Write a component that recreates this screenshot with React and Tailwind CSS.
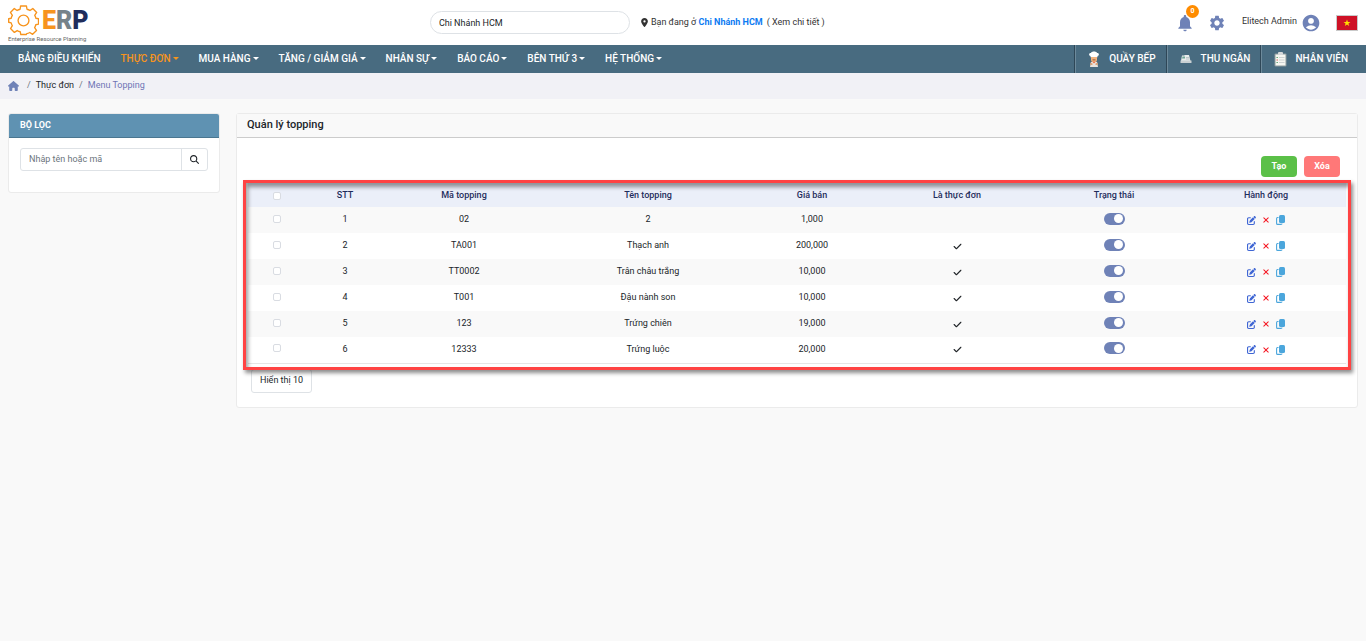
import React, { useState } from "react";
import {
  FaCheck,
  FaHouse,
  FaLocationDot,
  FaMagnifyingGlass,
  FaPenToSquare,
} from "react-icons/fa6";
import { IoClose } from "react-icons/io5";
import { MdAccountCircle, MdNotifications, MdSettings } from "react-icons/md";

const menus = [
  { label: "BẢNG ĐIỀU KHIỂN" },
  { label: "THỰC ĐƠN", caret: true, active: true },
  { label: "MUA HÀNG", caret: true },
  { label: "TĂNG / GIẢM GIÁ", caret: true },
  { label: "NHÂN SỰ", caret: true },
  { label: "BÁO CÁO", caret: true },
  { label: "BÊN THỨ 3", caret: true },
  { label: "HỆ THỐNG", caret: true },
];

const toppings = [
  { code: "02", name: "2", price: "1,000", inMenu: false },
  { code: "TA001", name: "Thạch anh", price: "200,000", inMenu: true },
  { code: "TT0002", name: "Trân châu trắng", price: "10,000", inMenu: true },
  { code: "T001", name: "Đậu nành son", price: "10,000", inMenu: true },
  { code: "123", name: "Trứng chiên", price: "19,000", inMenu: true },
  { code: "12333", name: "Trứng luộc", price: "20,000", inMenu: true },
];

const Logo = () => (
  <a href="#" className="flex w-20 flex-col" aria-label="ERP">
    <div className="flex h-8 items-center gap-[3px]">
      <svg viewBox="0 0 32 32" className="h-8 w-[31px] shrink-0" fill="none" stroke="#f7941d" strokeWidth="1.4">
        <path
          strokeLinejoin="round"
          d="M13 1.5h6l.6 3.400q1.700.4 3.100 1.300l2.900-2 4 4-2 3q.9 1.400 1.200 3l2.700.5v5.600l-2.800.6q-.4 1.600-1.200 3l1.900 2.900-4 4-2.900-1.900q-1.500.9-3.100 1.200L18.800 31h-5.600l-.6-2.900q-1.700-.3-3.100-1.200l-2.900 1.900-4-4 1.900-2.900q-.8-1.400-1.200-3L.7 18.300v-3.600l2.600-.5q.3-1.600 1.200-3l-2-3 4-4 2.900 2q1.400-.9 3.100-1.300z"
        />
        <circle cx="16" cy="16.5" r="5.6" />
      </svg>
      <span className="pt-[3px] text-[25px] leading-8 font-black">
        <span className="text-[#f7941d]">E</span>
        <span className="text-[#76838a]">R</span>
        <span className="text-[#1f2d5c]">P</span>
      </span>
    </div>
    <span className="text-[6px] leading-[6px] whitespace-nowrap text-[#666]">Enterprise Resource Planning</span>
  </a>
);

const ChefIcon = () => (
  <svg viewBox="0 0 14 16" className="h-4 w-[14px]">
    <path d="M3.500 5C1.500 4.600 1.700 1.800 3.900 2 4.600 0 9.400 0 10.100 2c2.200-.2 2.400 2.600.4 3v1.200h-7z" fill="#fff" />
    <path d="M4 6h6v2.500a3 3 0 0 1-6 0z" fill="#f2b27e" />
    <path d="M5.500 8.500h3v.8h-3z" fill="#7a4a2b" />
    <path d="M4 11h6l1 5H3z" fill="#e9e4df" />
    <path d="M3.500 11.500l2 1v1.500H3zM10.500 11.500l-2 1v1.500H11z" fill="#dba47a" />
    <path d="M5.400 10.800h3.200L7 12.600z" fill="#e8643c" />
  </svg>
);

const CashierIcon = () => (
  <svg viewBox="0 0 12 10" className="h-[10px] w-3">
    <path d="M2 1.500h2.500V1H9l1.500 6H1z" fill="#e8ecec" />
    <path d="M2.500 2.500h2.500v2H2z" fill="#6fa596" />
    <path d="M6 3.500h3M6 5h3.500" stroke="#a9b6ba" strokeWidth=".7" />
    <path d="M.5 6.500h11V9H.5z" fill="#c9d0d2" />
  </svg>
);

const ClipboardIcon = () => (
  <svg viewBox="0 0 13 15" className="h-[15px] w-[13px]">
    <rect x=".5" y="1.500" width="12" height="13" rx="1" fill="#8d9a9b" />
    <rect x="1.500" y="2.500" width="10" height="11" fill="#f6f6f1" />
    <rect x="4" y="0" width="5" height="3" rx="1" fill="#d6d9da" />
    <path d="M2.500 5.500h1.400M2.500 10.500h1.400" stroke="#5da06c" />
    <path d="M2.500 8h1.400" stroke="#d8574e" />
    <path d="M5 5.500h5.500M5 8h5.500M5 10.500h5.500" stroke="#cfd3d3" />
  </svg>
);

const FlagIcon = () => (
  <svg viewBox="0 0 22 16" className="h-4 w-[22px]">
    <rect width="22" height="16" fill="#c9c9c9" />
    <rect x="1" y="1" width="20" height="14" fill="#ce1126" />
    <path d="M11 4.500l.9 2.500h2.600l-2.100 1.600.8 2.500L11 9.600l-2.200 1.500.8-2.500L7.500 7h2.600z" fill="#ffde00" />
  </svg>
);

const CopyIcon = () => (
  <svg viewBox="0 0 9 10" className="h-[10px] w-[9px]">
    <rect x="3" y="0" width="6" height="8" rx="1.500" fill="currentColor" />
    <path d="M2.500 2.500H1.500Q.6 2.500.6 3.500V8.400Q.6 9.400 1.600 9.400H5Q6 9.400 6 8.500" fill="none" stroke="currentColor" strokeWidth="1.100" />
  </svg>
);

const stations = [
  { label: "QUẦY BẾP", icon: <ChefIcon /> },
  { label: "THU NGÂN", icon: <CashierIcon /> },
  { label: "NHÂN VIÊN", icon: <ClipboardIcon /> },
];

const TopBar = () => (
  <header className="flex h-[45px] items-center bg-white px-2">
    <div className="w-5/16 shrink-0">
      <Logo />
    </div>
    <div className="flex items-center text-[9px]">
      <input
        type="text"
        aria-label="Chi nhánh"
        defaultValue="Chi Nhánh HCM"
        className="h-[23px] w-[200px] rounded-full border border-[#dee2e6] bg-white px-2 text-[#212529]"
      />
      <FaLocationDot className="mr-[2px] ml-[10px] h-[9px] w-[9px]" />
      <span>
        Bạn đang ở <a href="#" className="font-bold text-[#0d7bf2]">Chi Nhánh HCM</a>
      </span>
      <a href="#" className="ml-1">( Xem chi tiết )</a>
    </div>
    <div className="flex flex-1 items-center justify-end text-[#6f82b7]">
      <button type="button" aria-label="Thông báo" className="relative mr-[13px]">
        <MdNotifications className="h-5 w-5" />
        <span className="absolute -top-2 left-[11px] flex h-[13px] w-[13px] items-center justify-center rounded-full bg-[#ff8c00] text-[7px] font-bold text-white">
          0
        </span>
      </button>
      <button type="button" aria-label="Cài đặt" className="mr-4">
        <MdSettings className="h-[18px] w-[18px]" />
      </button>
      <button type="button" className="mr-[15px] flex items-center gap-1 text-[9px]">
        <span className="pb-[2px] text-[#333]">Elitech Admin</span>
        <MdAccountCircle className="h-5 w-5" />
      </button>
      <button type="button" aria-label="Tiếng Việt">
        <FlagIcon />
      </button>
    </div>
  </header>
);

const NavBar = () => (
  <nav className="flex h-7 items-stretch justify-between bg-[#486b80] text-[10px] font-medium text-white">
    <div className="flex items-center gap-5 pb-[2px] pl-[18px]">
      {menus.map((menu) => (
        <a
          key={menu.label}
          href="#"
          className={`flex items-center gap-[2px] whitespace-nowrap ${menu.active ? "text-[#f7941d]" : "text-white"}`}
        >
          {menu.label}
          {menu.caret && (
            <svg viewBox="0 0 6 3" className="h-[3px] w-[6px]" fill="currentColor">
              <path d="M0 0h6L3 3z" />
            </svg>
          )}
        </a>
      ))}
    </div>
    <div className="flex items-stretch">
      {stations.map((station) => (
        <a
          key={station.label}
          href="#"
          className="flex items-center border-l border-[#2e4757] pr-[10px] pl-3 whitespace-nowrap shadow-[inset_1px_0_0_#6d8a9b] last:pr-[18px]"
        >
          <span className="mr-2 flex w-[14px] justify-center">{station.icon}</span>
          <span className="pb-[2px]">{station.label}</span>
        </a>
      ))}
    </div>
  </nav>
);

const Breadcrumb = () => (
  <div className="flex h-[26px] items-center gap-[5px] bg-[#f1f1f6] px-2 text-[9px] text-[#6c757d]">
    <a href="#" aria-label="Trang chủ" className="mr-[3px] text-[#6f82b7]">
      <FaHouse className="h-[10px] w-[11px]" />
    </a>
    <span>/</span>
    <a href="#" className="text-[#212529]">Thực đơn</a>
    <span>/</span>
    <span className="text-[#6f74b5]">Menu Topping</span>
  </div>
);

const FilterPanel = () => (
  <aside className="h-20 w-[212px] shrink-0 overflow-hidden rounded-[3px] border border-[#ebebeb] bg-white">
    <h2 className="h-6 border-b border-[#4a7690] bg-[#5f92b2] pl-[11px] text-[9px] leading-[22px] font-bold text-white">
      BỘ LỌC
    </h2>
    <div className="mx-[11px] mt-[10px] flex h-[23px] overflow-hidden rounded-[3px] border border-[#dee2e6]">
      <input
        type="text"
        aria-label="Nhập tên hoặc mã"
        placeholder="Nhập tên hoặc mã"
        className="min-w-0 flex-1 px-2 text-[9px] placeholder:text-[#6c757d]"
      />
      <button type="button" aria-label="Tìm" className="flex w-[26px] items-center justify-center border-l border-[#dee2e6] text-[#212529]">
        <FaMagnifyingGlass className="h-[9px] w-[9px]" />
      </button>
    </div>
  </aside>
);

const checkboxClass =
  "block mx-auto h-2 w-2 appearance-none rounded-[2px] border border-[#d9dce2] bg-white checked:bg-[#6f82b7]";

const ToppingRow = ({ topping, index }) => {
  const [enabled, setEnabled] = useState(true);

  return (
    <tr className="h-[26px] odd:bg-[#f9f9f9] even:bg-white">
      <td className="pb-[3px]">
        <input type="checkbox" aria-label={`Chọn ${topping.name}`} className={checkboxClass} />
      </td>
      <td>{index + 1}</td>
      <td>{topping.code}</td>
      <td>{topping.name}</td>
      <td>{topping.price}</td>
      <td>{topping.inMenu && <FaCheck className="mx-auto h-[9px] w-[9px]" />}</td>
      <td className="pb-[3px]">
        <input
          type="checkbox"
          role="switch"
          aria-label={`Trạng thái ${topping.name}`}
          checked={enabled}
          onChange={() => setEnabled(!enabled)}
          className="mx-auto flex h-3 w-[21px] appearance-none items-center rounded-full bg-gray-300 px-[2px] before:h-[9px] before:w-[9px] before:rounded-full before:bg-white checked:justify-end checked:bg-[#6f82b7]"
        />
      </td>
      <td>
        <div className="flex items-center justify-center gap-[5px]">
          <button type="button" aria-label="Sửa" className="text-[#3f66d4]">
            <FaPenToSquare className="h-[9px] w-[9px]" />
          </button>
          <button type="button" aria-label="Xóa" className="text-[#f5101c]">
            <IoClose className="h-[10px] w-[10px]" />
          </button>
          <button type="button" aria-label="Sao chép" className="text-[#4ba6dc]">
            <CopyIcon />
          </button>
        </div>
      </td>
    </tr>
  );
};

const ToppingTable = () => (
  <div className="relative mx-[11px]">
    <table className="w-full table-fixed border-b border-[#e6e6e6] text-center text-[9px] text-[#212529]">
      <thead>
        <tr className="h-6 bg-[#ebeff9] text-[#1f2d5c] [&>th]:pt-[2px] [&>th]:font-medium">
          <th className="w-[58px]">
            <input type="checkbox" aria-label="Chọn tất cả" className={checkboxClass} />
          </th>
          <th className="w-[78px]">STT</th>
          <th className="w-[160px]">Mã topping</th>
          <th className="w-[208px]">Tên topping</th>
          <th className="w-[120px]">Giá bán</th>
          <th className="w-[170px]">Là thực đơn</th>
          <th className="w-[144px]">Trạng thái</th>
          <th className="w-[160px]">Hành động</th>
        </tr>
      </thead>
      <tbody>
        {toppings.map((topping, index) => (
          <ToppingRow key={topping.code} topping={topping} index={index} />
        ))}
      </tbody>
    </table>
    {/* highlight frame around the list */}
    <div className="pointer-events-none absolute -inset-x-[5px] -top-[3px] -bottom-[6px] border-[3px] border-[#ff4343] shadow-[2px_3px_4px_rgba(0,0,0,0.45),inset_2px_4px_4px_rgba(0,0,0,0.4)]" />
  </div>
);

export default function App() {
  return (
    <div className="min-h-screen bg-[#f9f9f9] font-[Roboto,sans-serif] text-[#333]">
      <TopBar />
      <NavBar />
      <Breadcrumb />
      <main className="flex items-start gap-4 px-2 pt-[14px]">
        <FilterPanel />
        <section className="min-w-0 flex-1 rounded-[3px] border border-[#ebebeb] bg-white pb-[14px]">
          <h1 className="h-6 border-b border-[#ccc] bg-[#f9f9f9] pl-[10px] text-[11px] leading-[22px] font-medium text-[#212529]">
            Quản lý topping
          </h1>
          <div className="mt-[18px] mr-[17px] mb-[6px] flex justify-end gap-[7px] text-[9px] font-bold text-white">
            <button type="button" className="h-[21px] w-9 rounded-[4px] bg-[#5bc048]">Tạo</button>
            <button type="button" className="h-[21px] w-9 rounded-[4px] bg-[#ff7878]">Xóa</button>
          </div>
          <ToppingTable />
          <button type="button" className="mt-[5px] ml-[14px] h-6 rounded-[3px] border border-[#dee2e6] px-2 text-[9px] text-[#212529]">
            Hiển thị 10
          </button>
        </section>
      </main>
    </div>
  );
}
